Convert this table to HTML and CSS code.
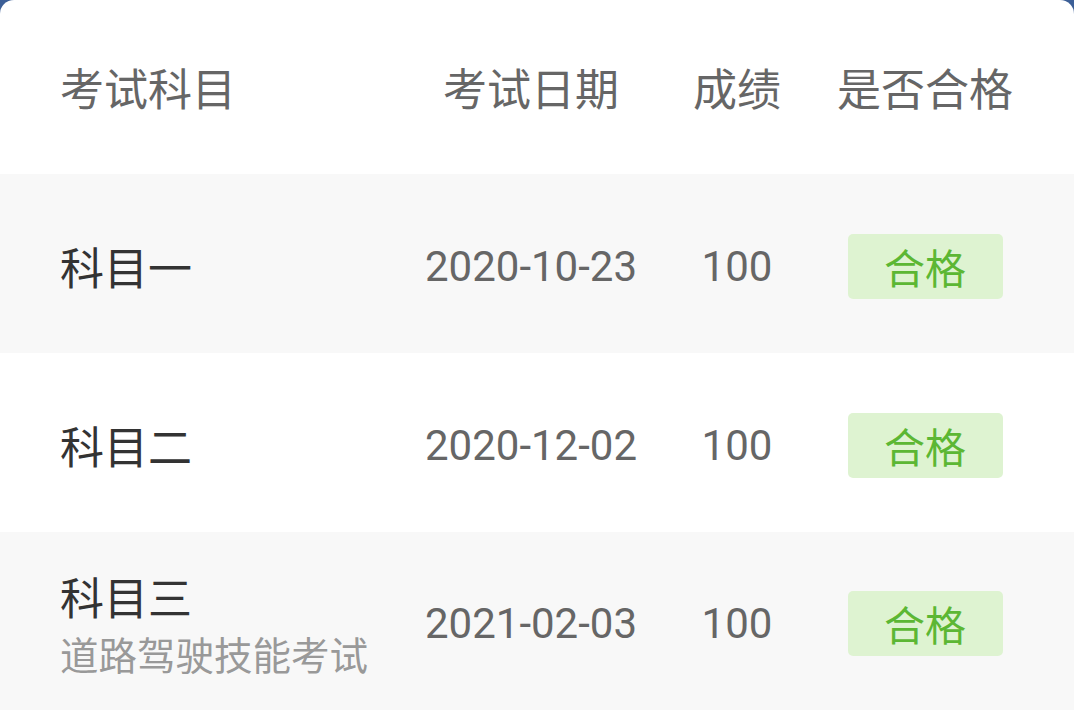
FILE: index.html
```html
<!DOCTYPE html>
<html lang="zh">
<head>
<meta charset="utf-8">
<link rel="stylesheet" href="styles.css">
</head>
<body>
<div class="card">
  <div class="row head">
    <div class="c1">考试科目</div>
    <div class="c2">考试日期</div>
    <div class="c3">成绩</div>
    <div class="c4">是否合格</div>
  </div>
  <div class="row alt">
    <div class="c1"><div class="name">科目一</div></div>
    <div class="c2 num">2020-10-23</div>
    <div class="c3 num">100</div>
    <div class="c4"><span class="badge">合格</span></div>
  </div>
  <div class="row">
    <div class="c1"><div class="name">科目二</div></div>
    <div class="c2 num">2020-12-02</div>
    <div class="c3 num">100</div>
    <div class="c4"><span class="badge">合格</span></div>
  </div>
  <div class="row alt last">
    <div class="c1"><div class="name">科目三</div><div class="sub">道路驾驶技能考试</div></div>
    <div class="c2 num">2021-02-03</div>
    <div class="c3 num">100</div>
    <div class="c4"><span class="badge">合格</span></div>
  </div>
</div>
</body>
</html>
```
FILE: styles.css
```css
html, body {
  margin: 0;
  padding: 0;
  background: #3c5f97;
  width: 1074px;
  height: 720px;
  overflow: hidden;
}
.card {
  background: #ffffff;
  border-radius: 14px 14px 0 0;
  height: 720px;
  font-family: Roboto, "Noto Sans CJK SC", sans-serif;
}
.row {
  box-sizing: border-box;
  display: grid;
  grid-template-columns: 310px 322px 90px 286px;
  padding-left: 60px;
  padding-top: 5px;
  align-items: center;
  height: 179px;
}
.row.head {
  height: 174px;
  padding-top: 0;
  color: #666666;
  font-size: 44px;
  font-family: "Noto Sans CJK SC", sans-serif;
}
.row.alt { background: #f8f8f8; }
.row.last { height: 178px; }
.c2, .c3, .c4 { text-align: center; }
.head .c1 { text-align: left; }
.name {
  font-family: "Noto Sans CJK SC", sans-serif;
  font-size: 44px;
  color: #333333;
  line-height: 58px;
}
.sub {
  font-family: "Noto Sans CJK SC", sans-serif;
  font-size: 38.5px;
  color: #999999;
  line-height: 56px;
}
.num {
  font-size: 42px;
  color: #666666;
}
.badge {
  display: inline-block;
  width: 155px;
  height: 65px;
  line-height: 65px;
  background: #def3d1;
  color: #5cb734;
  border-radius: 5px;
  font-family: "Noto Sans CJK SC", sans-serif;
  font-size: 41px;
  text-align: center;
}
```
